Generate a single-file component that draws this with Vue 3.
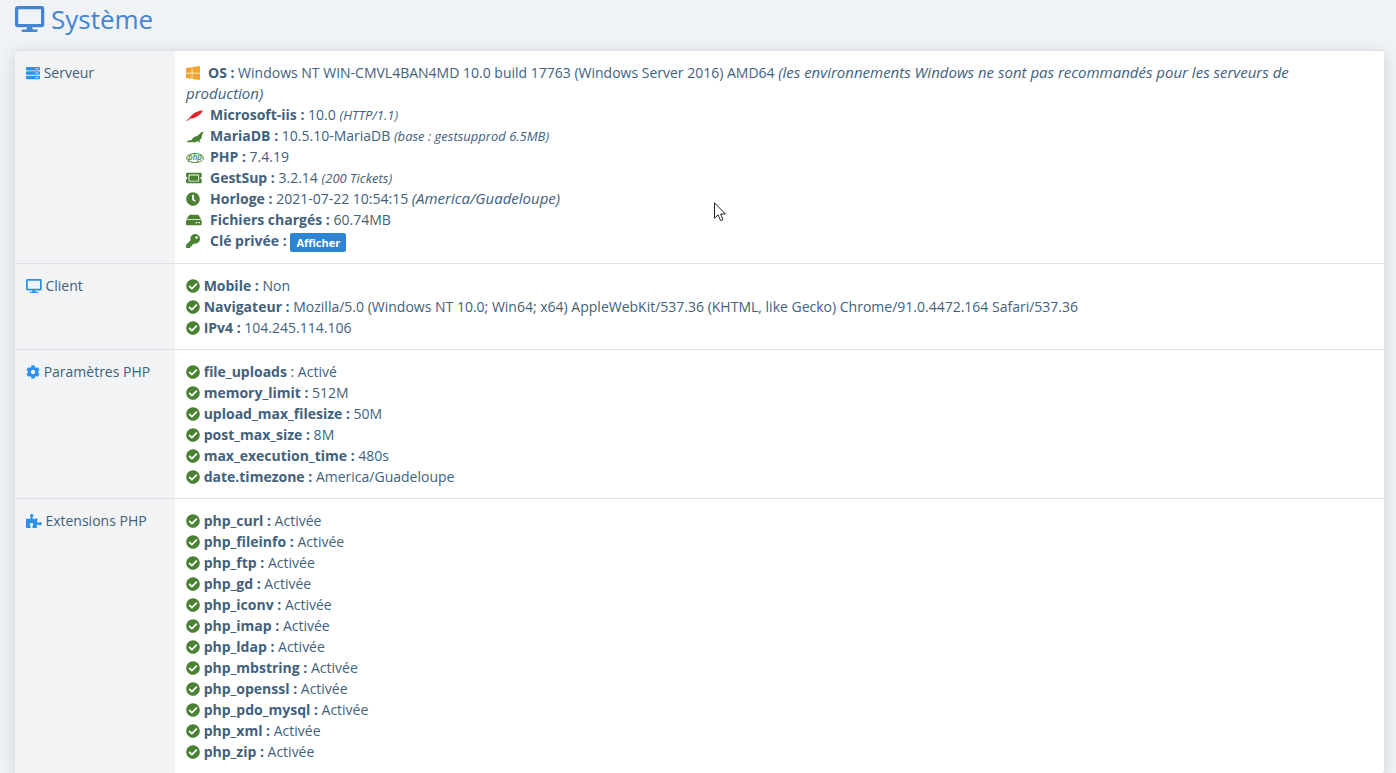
<template>
  <div class="page">
    <h1>
      <svg class="icon" viewBox="0 0 576 512"><path :d="icons.desktop.d" /></svg>
      Système
    </h1>

    <div class="card">
      <table>
        <tbody>
          <!-- --------------- Server ------------------- -->
          <tr>
            <th scope="row">
              <svg class="icon" viewBox="0 0 512 512"><path :d="icons.server.d" /></svg>
              Serveur
            </th>
            <td>
              <div v-for="item in server" :key="item.name">
                <span class="slot" :class="item.icon">
                  <svg class="icon" :viewBox="icons[item.icon].box">
                    <path :d="icons[item.icon].d" />
                    <text v-if="item.icon === 'php'" x="9" y="10">php</text>
                  </svg>
                </span>
                <b>{{ item.name }} :</b>
                {{ item.value }}
                <i v-if="item.note" :class="{ small: item.small }">{{ item.note }}</i>
                <button v-if="item.button" type="button">{{ item.button }}</button>
              </div>
            </td>
          </tr>
          <!-- --------------- Client, settings, extensions ------------- -->
          <tr v-for="section in sections" :key="section.title">
            <th scope="row">
              <svg class="icon" :viewBox="icons[section.icon].box">
                <path :d="icons[section.icon].d" />
              </svg>
              {{ section.title }}
            </th>
            <td>
              <div v-for="item in section.items" :key="item[0]">
                <svg class="icon" viewBox="0 0 512 512"><path :d="icons.check.d" /></svg>
                {{ " " }}<template v-if="item[0] === 'file_uploads'"><b>{{ item[0] }}</b> :</template>
                <b v-else>{{ item[0] }} :</b>
                {{ item[1] }}
              </div>
            </td>
          </tr>
        </tbody>
      </table>
    </div>

    <svg class="pointer" viewBox="0 0 12 20">
      <path d="M.5 .8V16.3L4.1 12.9L6.4 18.2C7 19.1 9.2 18.2 8.8 17.1L6.6 12H11.4Z" />
    </svg>
  </div>
</template>

<script setup>
// ======= Icons ============ //
const icons = {
  desktop: {
    box: "0 0 576 512",
    d: "M528 0H48C21.5 0 0 21.5 0 48v320c0 26.5 21.5 48 48 48h192l-16 48h-72c-13.3 0-24 10.7-24 24s10.7 24 24 24h272c13.3 0 24-10.7 24-24s-10.7-24-24-24h-72l-16-48h192c26.5 0 48-21.5 48-48V48c0-26.5-21.5-48-48-48zm-16 352H64V64h448v288z",
  },
  server: {
    box: "0 0 512 512",
    d: [32, 192, 352]
      .map(
        (y) =>
          `M480 ${y + 128}H32c-17.673 0-32-14.327-32-32V${y + 32}c0-17.673 14.327-32 32-32h448c17.673 0 32 14.327 32 32v64c0 17.673-14.327 32-32 32zm-48-88c-13.255 0-24 10.745-24 24s10.745 24 24 24 24-10.745 24-24-10.745-24-24-24zm-64 0c-13.255 0-24 10.745-24 24s10.745 24 24 24 24-10.745 24-24-10.745-24-24-24z`
      )
      .join(""),
  },
  cog: {
    box: "0 0 512 512",
    d: "M487.4 315.7l-42.6-24.6c4.3-23.2 4.3-47 0-70.2l42.6-24.6c4.9-2.8 7.1-8.6 5.5-14-11.1-35.6-30-67.8-54.7-94.6-3.8-4.1-10-5.1-14.8-2.3L380.8 110c-17.9-15.4-38.5-27.3-60.8-35.1V25.8c0-5.6-3.9-10.5-9.4-11.7-36.7-8.2-74.3-7.8-109.2 0-5.5 1.2-9.4 6.1-9.4 11.7V75c-22.2 7.9-42.8 19.8-60.8 35.1L88.7 85.5c-4.9-2.8-11-1.9-14.8 2.3-24.7 26.7-43.6 58.9-54.7 94.6-1.7 5.4.6 11.2 5.5 14L67.3 221c-4.3 23.2-4.3 47 0 70.2l-42.6 24.6c-4.9 2.8-7.1 8.6-5.5 14 11.1 35.6 30 67.8 54.7 94.6 3.8 4.1 10 5.1 14.8 2.3l42.6-24.6c17.9 15.4 38.5 27.3 60.8 35.1v49.2c0 5.6 3.9 10.5 9.4 11.7 36.7 8.2 74.3 7.8 109.2 0 5.5-1.2 9.4-6.1 9.4-11.7v-49.2c22.2-7.9 42.8-19.8 60.8-35.1l42.6 24.6c4.9 2.8 11 1.9 14.8-2.3 24.7-26.7 43.6-58.9 54.7-94.6 1.5-5.5-.7-11.3-5.6-14.1zM256 336c-44.1 0-80-35.9-80-80s35.9-80 80-80 80 35.9 80 80-35.9 80-80 80z",
  },
  puzzle: {
    box: "0 0 576 512",
    d: "M519.442 288.651c-41.519 0-59.5 31.593-82.058 31.593C377.409 320.244 432 144 432 144s-196.288 80-196.288-3.297c0-35.827 36.288-46.25 36.288-85.985C272 19.216 243.885 0 210.539 0c-34.654 0-66.366 18.891-66.366 56.346 0 41.364 31.711 59.277 31.711 81.75C175.885 207.719 0 166.758 0 166.758v333.237s178.635 41.047 178.635-28.662c0-22.473-40-40.107-40-81.471 0-37.456 29.25-56.346 63.577-56.346 33.673 0 61.788 19.216 61.788 54.717 0 39.735-36.288 50.158-36.288 85.985 0 60.803 129.675 25.73 181.23 25.73 0 0-34.725-120.101 25.827-120.101 35.962 0 46.423 36.152 86.308 36.152C556.712 416 576 387.99 576 354.443c0-34.199-18.962-65.792-56.558-65.792z",
  },
  check: {
    box: "0 0 512 512",
    d: "M504 256c0 136.967-111.033 248-248 248S8 392.967 8 256 119.033 8 256 8s248 111.033 248 248zM227.314 387.314l184-184c6.248-6.248 6.248-16.379 0-22.627l-22.627-22.627c-6.248-6.249-16.379-6.249-22.628 0L216 308.118l-70.059-70.059c-6.248-6.248-16.379-6.248-22.628 0l-22.627 22.627c-6.248 6.248-6.248 16.379 0 22.627l104 104c6.249 6.249 16.379 6.249 22.628.001z",
  },
  windows: {
    box: "0 0 448 448",
    d: "M0 62l183.6-25.3v177.4H0V62zm0 324.6l183.6 25.3V236.7H0v149.9zm203.8 28L448 448V236.7H203.8v177.9zm0-380.6v180.1H448V0L203.8 34z",
  },
  feather: {
    box: "0 0 18 14",
    d: "M.4 12.6L3.8 9.6C5.4 6.7 9.6 3.9 13.2 3L16.6 2.2C16.8 4.5 13.2 7.4 9.6 9.2C7.5 10.2 5.6 10.7 4.6 10.4L1 12.9Z",
  },
  seal: {
    box: "0 0 18 14",
    d: "M.3 12.9C1.8 11.6 3.5 11.1 5.6 10.9C6.8 9 8 7.8 10.2 7.3C12.7 6.6 13.5 5 14.4 3.8C15.2 3 16.4 3.2 17.8 2.7C17.7 3.8 16.7 4.4 16.2 5.2C16 8 15.3 10 13.5 11.4L14.7 14L12.1 12.3C10 12.6 9 13.2 7.8 14.2L7.4 12.7C5 13.3 2.3 13.6 .3 12.9Z",
  },
  php: {
    box: "0 0 18 14",
    d: "M9 3.5C4.2 3.5 .7 5.5 .7 8S4.2 12.5 9 12.5S17.3 10.5 17.3 8S13.8 3.5 9 3.5Z",
  },
  ticket: {
    box: "0 0 576 512",
    d: "M128 160h320v192H128V160zm400 96c0 26.51 21.49 48 48 48v96c0 26.51-21.49 48-48 48H48c-26.51 0-48-21.49-48-48v-96c26.51 0 48-21.49 48-48s-21.49-48-48-48v-96c0-26.51 21.49-48 48-48h480c26.51 0 48 21.49 48 48v96c-26.51 0-48 21.49-48 48zm-48-104c0-13.255-10.745-24-24-24H120c-13.255 0-24 10.745-24 24v208c0 13.255 10.745 24 24 24h336c13.255 0 24-10.745 24-24V152z",
  },
  clock: {
    box: "0 0 512 512",
    d: "M256 8C119 8 8 119 8 256s111 248 248 248 248-111 248-248S393 8 256 8Zm92.49 313l-20 25a16 16 0 0 1-22.49 2.5l-67-49.72a40 40 0 0 1-15-31.23V112a16 16 0 0 1 16-16h32a16 16 0 0 1 16 16V256l58 42.5a16 16 0 0 1 2.49 22.5Z",
  },
  disk: {
    box: "0 0 576 512",
    d: "M576 304v96c0 26.51-21.49 48-48 48H48c-26.51 0-48-21.49-48-48v-96c0-26.51 21.49-48 48-48h480c26.51 0 48 21.49 48 48zm-48-80a79.557 79.557 0 0 1 30.777 6.165L462.25 85.374A48.003 48.003 0 0 0 422.311 64H153.689a48 48 0 0 0-39.938 21.374L17.223 230.165A79.557 79.557 0 0 1 48 224h480zm-48 96c-17.673 0-32 14.327-32 32s14.327 32 32 32 32-14.327 32-32-14.327-32-32-32zm-96 0c-17.673 0-32 14.327-32 32s14.327 32 32 32 32-14.327 32-32-14.327-32-32-32z",
  },
  key: {
    box: "0 0 512 512",
    d: "M512 176.001C512 273.203 433.202 352 336 352c-11.22 0-22.19-1.062-32.827-3.069l-24.012 27.014A23.999 23.999 0 0 1 261.223 384H224v40c0 13.255-10.745 24-24 24h-40v40c0 13.255-10.745 24-24 24H24c-13.255 0-24-10.745-24-24v-78.059c0-6.365 2.529-12.47 7.029-16.971l161.802-161.802C163.108 213.814 160 195.271 160 176 160 78.798 238.797.001 335.999 0 433.488-.001 512 78.511 512 176.001zM336 128c0 26.51 21.49 48 48 48s48-21.49 48-48-21.49-48-48-48-48 21.49-48 48z",
  },
};

// ======= Server information ============ //
const server = [
  {
    icon: "windows",
    name: "OS",
    value: "Windows NT WIN-CMVL4BAN4MD 10.0 build 17763 (Windows Server 2016) AMD64",
    note: "(les environnements Windows ne sont pas recommandés pour les serveurs de production)",
  },
  { icon: "feather", name: "Microsoft-iis", value: "10.0", note: "(HTTP/1.1)", small: true },
  {
    icon: "seal",
    name: "MariaDB",
    value: "10.5.10-MariaDB",
    note: "(base : gestsupprod 6.5MB)",
    small: true,
  },
  { icon: "php", name: "PHP", value: "7.4.19" },
  { icon: "ticket", name: "GestSup", value: "3.2.14", note: "(200 Tickets)", small: true },
  { icon: "clock", name: "Horloge", value: "2021-07-22 10:54:15", note: "(America/Guadeloupe)" },
  { icon: "disk", name: "Fichiers chargés", value: "60.74MB" },
  { icon: "key", name: "Clé privée", button: "Afficher" },
];

// ======= Other sections ============ //
const extensions = [
  "curl",
  "fileinfo",
  "ftp",
  "gd",
  "iconv",
  "imap",
  "ldap",
  "mbstring",
  "openssl",
  "pdo_mysql",
  "xml",
  "zip",
];

const sections = [
  {
    title: "Client",
    icon: "desktop",
    items: [
      ["Mobile", "Non"],
      [
        "Navigateur",
        "Mozilla/5.0 (Windows NT 10.0; Win64; x64) AppleWebKit/537.36 (KHTML, like Gecko) Chrome/91.0.4472.164 Safari/537.36",
      ],
      ["IPv4", "104.245.114.106"],
    ],
  },
  {
    title: "Paramètres PHP",
    icon: "cog",
    items: [
      ["file_uploads", "Activé"],
      ["memory_limit", "512M"],
      ["upload_max_filesize", "50M"],
      ["post_max_size", "8M"],
      ["max_execution_time", "480s"],
      ["date.timezone", "America/Guadeloupe"],
    ],
  },
  {
    title: "Extensions PHP",
    icon: "puzzle",
    items: extensions.map((name) => [`php_${name}`, "Activée"]),
  },
];
</script>

<style>
body {
  margin: 0;
  background-color: #eff3f6;
}
</style>

<style scoped>
.page {
  padding: 0 12px 0 15px;
  font-family: "Open Sans", sans-serif;
  font-size: 14px;
  line-height: 21px;
  color: #41617d;
}

h1 {
  margin: 0;
  padding-bottom: 11px;
  font-size: 26px;
  font-weight: 400;
  line-height: 39px;
  color: #4384d3;
}

.icon {
  height: 1em;
  fill: currentColor;
  vertical-align: -0.125em;
  overflow: visible;
}

.card {
  background-color: #fff;
  border-radius: 3px;
  box-shadow: 0 4px 16px rgba(60, 80, 100, 0.2);
}

table {
  width: 100%;
  border-collapse: separate;
  border-spacing: 0;
}

th,
td {
  padding: 11px;
  border-top: 1px solid #dee2e6;
  vertical-align: top;
  text-align: left;
  font-weight: 400;
}

td {
  padding-right: 20px;
}

th {
  width: 138px;
  background-color: #f2f3f5;
}

th .icon {
  color: #2d91ec;
}

td .icon {
  color: #4a8133;
}

b {
  font-weight: 700;
}

i {
  font-size: 15px;
  line-height: 1;
}

.small {
  font-size: 13px;
}

.slot {
  display: inline-block;
  width: 24px;
}

.slot.windows {
  width: 22px;
}

.windows .icon {
  color: #f0a52e;
}

.feather .icon {
  color: #dc2529;
}

.php path {
  fill: none;
  stroke: currentColor;
}

.php text {
  font-size: 8px;
  font-style: italic;
  font-weight: 600;
  text-anchor: middle;
}

button {
  margin-bottom: -1px;
  padding: 0 6px;
  border: 0;
  border-radius: 2px;
  background-color: #2c84d2;
  color: #fff;
  font-family: inherit;
  font-size: 11px;
  font-weight: 700;
  line-height: 19px;
  vertical-align: bottom;
}

tr:first-child td {
  padding-bottom: 12px;
}

.pointer {
  position: absolute;
  top: 202px;
  left: 714px;
  width: 12px;
  height: 20px;
  fill: #fff;
  stroke: #222;
}
</style>
